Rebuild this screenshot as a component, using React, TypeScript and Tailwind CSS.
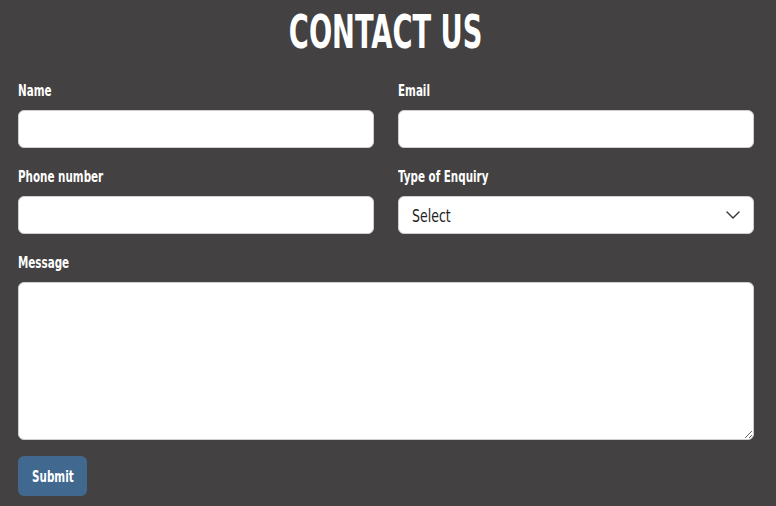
import { ChevronDown } from 'lucide-react';

const font = "font-['DejaVu_Sans_Condensed','Liberation_Sans',sans-serif]";

const Field = ({ label, children }: { label: string; children: React.ReactNode }) => {
    return (
        <div className="flex flex-col">
            <label className="block origin-left scale-x-[0.72] whitespace-nowrap text-[16px] leading-[26px] font-bold text-white mb-[6px]">
                {label}
            </label>
            {children}
        </div>
    );
};

const inputClass = 'h-[38px] w-full rounded-md border border-[#cfcfcf] bg-white px-3 text-[16px] text-[#222] outline-none';

const App = () => {
    return (
        <div className={`min-h-screen w-full bg-[#434141] pl-[18px] pr-[22px] ${font}`}>
            <h1 className="h-[64px] flex items-center justify-center text-[46px] font-bold text-white">
                <span className="inline-block scale-x-[0.66]">CONTACT US</span>
            </h1>
            <form className="mt-[14px]">
                <div className="grid grid-cols-2 gap-x-6 gap-y-4">
                    <Field label="Name">
                        <input type="text" className={inputClass} />
                    </Field>
                    <Field label="Email">
                        <input type="email" className={inputClass} />
                    </Field>
                    <Field label="Phone number">
                        <input type="tel" className={inputClass} />
                    </Field>
                    <Field label="Type of Enquiry">
                        <div className="relative">
                            <div className={`${inputClass} flex items-center pl-[13px] pt-[3px]`}>
                                <span className="inline-block origin-left scale-x-[0.82] text-[17px] text-[#1e1e1e]">Select</span>
                            </div>
                            <ChevronDown className="absolute right-[9px] top-[7px] h-6 w-6 text-[#333]" strokeWidth={1.4} />
                        </div>
                    </Field>
                    <div className="col-span-2">
                        <Field label="Message">
                            <textarea className="h-[158px] w-full rounded-md border border-[#cfcfcf] bg-white p-3 text-[16px] outline-none" />
                        </Field>
                    </div>
                </div>
                <button
                    type="button"
                    className="mt-4 flex h-10 w-[69px] items-center justify-center rounded-md bg-[#41698f] pt-[2px] text-[16px] font-bold text-white"
                >
                    <span className="inline-block scale-x-[0.72]">Submit</span>
                </button>
            </form>
        </div>
    );
};

export default App;
